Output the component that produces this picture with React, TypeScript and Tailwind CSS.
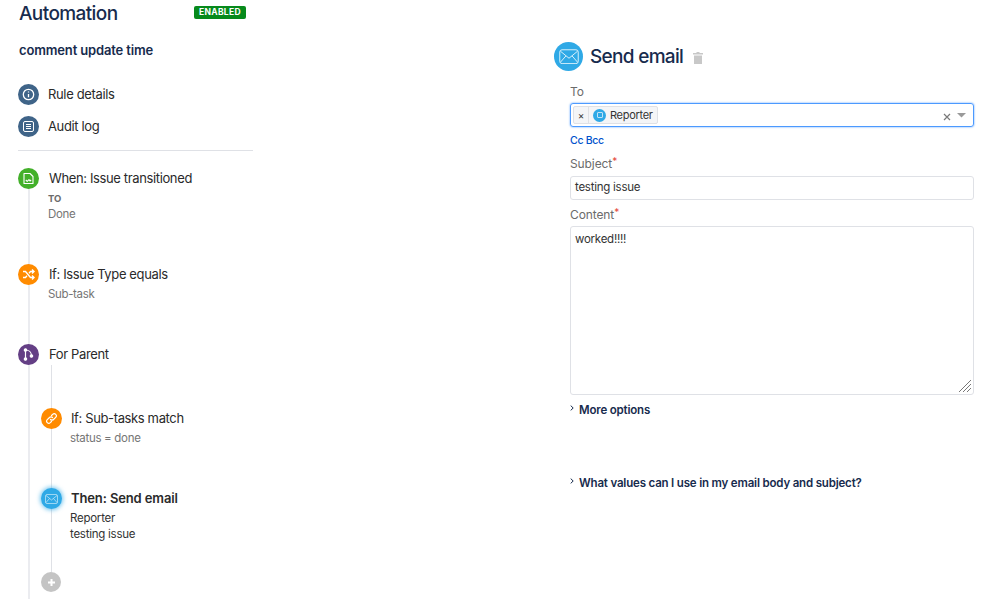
import React from 'react';

const navy = 'text-[#172b4d]';

const Circle = ({ bg, children, glow }: { bg: string; children: React.ReactNode; glow?: boolean }) => (
  <div className={`relative z-10 flex h-[21px] w-[21px] shrink-0 items-center justify-center rounded-full ${bg} ${glow ? 'shadow-[0_0_4px_1px_rgba(47,169,230,0.65)]' : ''}`}>
    {children}
  </div>
);

const MailIcon = ({ size = 13 }: { size?: number }) => (
  <svg width={size} height={size * 0.77} viewBox="0 0 26 20" fill="none" stroke="#d8f0fb" strokeWidth="1.3" strokeLinejoin="round">
    <rect x="1" y="1" width="24" height="18" rx="3" />
    <path d="M2 3l11 9 11-9M2 17l7-8M24 17l-7-8" />
  </svg>
);

const Step = ({ icon, title, bold, nested, children, h }: { icon: React.ReactNode; title: string; bold?: boolean; nested?: boolean; children?: React.ReactNode; h: string }) => (
  <div className={`flex ${nested ? 'gap-[9px]' : 'gap-[10px]'} ${h}`}>
    {icon}
    <div className="min-w-0">
      <div className={`text-[13px] leading-[21px] text-[#2a2a2a] ${bold ? 'font-semibold tracking-[-0.12px]' : 'tracking-[-0.37px]'}`}>{title}</div>
      {children}
    </div>
  </div>
);

const Label = ({ text, required }: { text: string; required?: boolean }) => (
  <div className="text-[12px] leading-[16px] tracking-[-0.1px] text-[#6b6b6b]">
    {text}
    {required && <span className="relative -top-[3px] text-[10px] leading-none text-[#e5483a]">*</span>}
  </div>
);

const Disclosure = ({ text }: { text: string }) => (
  <div className={`flex items-center gap-[5px] text-[11.5px] font-semibold leading-4 tracking-[-0.18px] ${navy}`}>
    <svg width="4" height="6" viewBox="0 0 4 6" fill="none" stroke="#172b4d" strokeWidth="1" className="-mt-1"><path d="M.7.6L3.2 3 .7 5.4" /></svg>
    {text}
  </div>
);

export default function App() {
  return (
    <div className="flex h-[599px] w-[998px] overflow-hidden bg-white font-['Inter','Liberation_Sans',sans-serif]">
      <aside className="box-content w-[254px] shrink-0 pl-[18px]">
        <div className="flex h-[27px] items-start">
          <h1 className={`ml-px w-[175px] text-[19px] font-medium leading-[27px] tracking-[-0.6px] ${navy}`}>Automation</h1>
          <span className="mt-[6px] rounded-[2px] bg-[#078a1c] px-[5px] text-[8.5px] font-bold leading-[13px] tracking-[0.3px] text-white">ENABLED</span>
        </div>
        <div className={`ml-px mt-[13px] text-[13px] font-semibold leading-5 tracking-[-0.15px] ${navy}`}>comment update time</div>

        <div className="mt-[24px] flex h-[21px] items-center gap-[9px] text-[13px] tracking-[-0.35px] text-[#2a2a2a]">
          <Circle bg="bg-[#3f6488]">
            <svg width="13" height="13" viewBox="0 0 13 13" fill="none" stroke="white" strokeWidth="1.3"><circle cx="6.5" cy="6.5" r="5.2" /><path d="M6.5 6v3.2M6.5 3.5v1" /></svg>
          </Circle>
          Rule details
        </div>
        <div className="mt-[11px] flex h-[21px] items-center gap-[9px] text-[13px] tracking-[-0.35px] text-[#2a2a2a]">
          <Circle bg="bg-[#3f6488]">
            <svg width="13" height="13" viewBox="0 0 13 13" fill="none" stroke="white" strokeWidth="1"><rect x="1.5" y="1.5" width="10" height="10" rx="1.5" /><path d="M4 4.5h5M4 6.5h5M4 8.5h5" /></svg>
          </Circle>
          Audit log
        </div>
        <div className="mt-[13px] h-px w-[235px] bg-[#dfe1e6]" />

        <div className="relative mt-[17px]">
          <div className="absolute left-[9.5px] top-0 h-[440px] w-[2px] bg-[#ebecf0]" />
          <Step
            h="h-[96px]"
            icon={
              <Circle bg="bg-[#43b02a]">
                <svg width="11" height="13" viewBox="0 0 11 13" fill="none" stroke="white" strokeWidth="1.1" strokeLinejoin="round"><path d="M1 1.5h6l3 3v7H1z" /><path d="M2.8 8l1.4 1.4L6 7.6l1 1.4 1.2-1" /></svg>
              </Circle>
            }
            title="When: Issue transitioned"
          >
            <div className="-ml-px mt-[3px] text-[9.5px] font-bold leading-[13px] text-[#6b6b6b]">TO</div>
            <div className="-ml-px mt-[1px] text-[11.5px] leading-[16px] tracking-[-0.3px] text-[#757575]">Done</div>
          </Step>
          <Step
            h="h-[80px]"
            icon={
              <Circle bg="bg-[#ff8b00]">
                <svg width="13" height="11" viewBox="0 0 13 11" fill="none" stroke="white" strokeWidth="1.4"><path d="M1 2.5h2.5l5 6H12M1 8.5h2.5l1.4-1.7M7 4.2l1.5-1.7H12M10 .6l2 1.9-2 1.9M10 6.6l2 1.9-2 1.9" /></svg>
              </Circle>
            }
            title="If: Issue Type equals"
          >
            <div className="-ml-px mt-[1px] text-[11.5px] leading-[16px] tracking-[-0.35px] text-[#757575]">Sub-task</div>
          </Step>
          <Step
            h="h-[54px]"
            icon={
              <Circle bg="bg-[#643f85]">
                <svg width="11" height="13" viewBox="0 0 11 13" fill="white" stroke="white" strokeWidth="1.2"><circle cx="2.5" cy="2" r="1.2" /><circle cx="2.5" cy="11" r="1.2" /><circle cx="8.5" cy="8" r="1.2" /><path fill="none" d="M2.5 2v9M2.5 2c3 0 6 2 6 6" /></svg>
              </Circle>
            }
            title="For Parent"
          />
          <div className="relative ml-[23px] mt-[10px]">
            <div className="absolute -top-[43px] left-[9.5px] h-[207px] w-px bg-[#dfe1e6]" />
            <Step
              nested
              h="h-[80px]"
              icon={
                <Circle bg="bg-[#ff8b00]">
                  <svg width="13" height="13" viewBox="0 0 13 13" fill="none" stroke="white" strokeWidth="1.2" strokeLinecap="round"><path d="M5.5 7.5a2 2 0 0 0 3 0l2.2-2.2a2 2 0 0 0-3-3L6.5 3.5" /><path d="M7.5 5.5a2 2 0 0 0-3 0L2.3 7.7a2 2 0 0 0 3 3l1.2-1.2" /></svg>
                </Circle>
              }
              title="If: Sub-tasks match"
            >
              <div className="-ml-px mt-[1px] text-[11.5px] leading-[16px] tracking-[-0.3px] text-[#757575]">status = done</div>
            </Step>
            <Step
              nested
              h="h-[84px]"
              bold
              icon={
                <Circle bg="bg-[#2fa9e6]" glow>
                  <MailIcon />
                </Circle>
              }
              title="Then: Send email"
            >
              <div className="-ml-px mt-[1px] text-[11.5px] leading-[16px] tracking-[-0.25px] text-[#333]">Reporter</div>
              <div className="-ml-px text-[11.5px] leading-[16px] tracking-[-0.25px] text-[#333]">testing issue</div>
            </Step>
            <div className="relative z-10 flex h-[20px] w-[20px] items-center justify-center rounded-full bg-[#c4c4c4] text-white">
              <svg width="9" height="9" viewBox="0 0 9 9" stroke="white" strokeWidth="2"><path d="M4.5 1v7M1 4.5h7" /></svg>
            </div>
          </div>
        </div>
      </aside>

      <main className="ml-[282px] w-[420px] shrink-0 pt-[42px]">
        <div className="flex items-center">
          <div className="flex h-[29px] w-[29px] items-center justify-center rounded-full bg-[#2fa9e6]">
            <MailIcon size={20} />
          </div>
          <h2 className={`ml-[7px] text-[19px] font-medium leading-[29px] tracking-[-0.7px] ${navy}`}>Send email</h2>
          <svg width="10" height="12" viewBox="0 0 10 12" fill="#c8c8c8" className="ml-[10px] mt-[2px]"><path d="M3.5 0h3v1H10v1.4H0V1h3.5zM1 3.4h8V12H1z" /></svg>
        </div>

        <div className="ml-[16px] w-[404px]">
          <div className="mt-[13px]"><Label text="To" /></div>
          <div className="mt-[3px] flex h-[24px] items-center rounded-[3px] border border-[#4c9aff] pl-[2px] pr-[7px] shadow-[0_0_2px_0_#4c9aff]">
            <div className="flex h-[18px] items-center rounded-[2px] border border-[#dfe1e6] bg-[#f4f5f7] text-[11px] leading-none tracking-[-0.3px] text-[#333]">
              <span className="flex h-full w-[15px] items-center justify-center border-r border-[#dfe1e6] text-[10px] text-[#333]">×</span>
              <span className="ml-[4px] flex h-[13px] w-[13px] items-center justify-center rounded-full bg-[#2fa9e6]">
                <span className="h-[6px] w-[6px] rounded-[1px] border border-[#bfe3f7]" />
              </span>
              <span className="ml-[4px] mr-[4px]">Reporter</span>
            </div>
            <div className="flex-1" />
            <svg width="8" height="8" viewBox="0 0 8 8" stroke="#7a7a7a" strokeWidth="1.2" className="mt-[4px]"><path d="M1 1l6 6M7 1L1 7" /></svg>
            <svg width="9" height="5" viewBox="0 0 9 5" fill="#9a9a9a" className="ml-[6px] mt-0"><path d="M0 0h9L4.5 4.5z" /></svg>
          </div>
          <div className="mt-[7px] text-[10.5px] font-medium leading-[14px] tracking-[-0.3px] text-[#0052cc]">Cc Bcc</div>

          <div className="mt-[8px]"><Label text="Subject" required /></div>
          <div className="mt-[4px] flex h-[24px] items-center rounded-[3px] border border-[#dfe1e6] px-[4px] text-[11.5px] tracking-[-0.25px] text-[#333]">testing issue</div>

          <div className="mt-[7px]"><Label text="Content" required /></div>
          <div className="relative mt-[3px] h-[169px] rounded-[3px] border border-[#dfe1e6] px-[4px] pt-[4px] text-[11.5px] leading-4 tracking-[-0.25px] text-[#333]">
            worked!!!!
            <svg width="14" height="14" viewBox="0 0 14 14" stroke="#555" strokeWidth="0.8" className="absolute bottom-px right-px"><path d="M1 13L13 1M5 13l8-8M9 13l4-4" /></svg>
          </div>

          <div className="mt-[7px]"><Disclosure text="More options" /></div>
          <div className="mt-[57px]"><Disclosure text="What values can I use in my email body and subject?" /></div>
        </div>
      </main>
    </div>
  );
}
